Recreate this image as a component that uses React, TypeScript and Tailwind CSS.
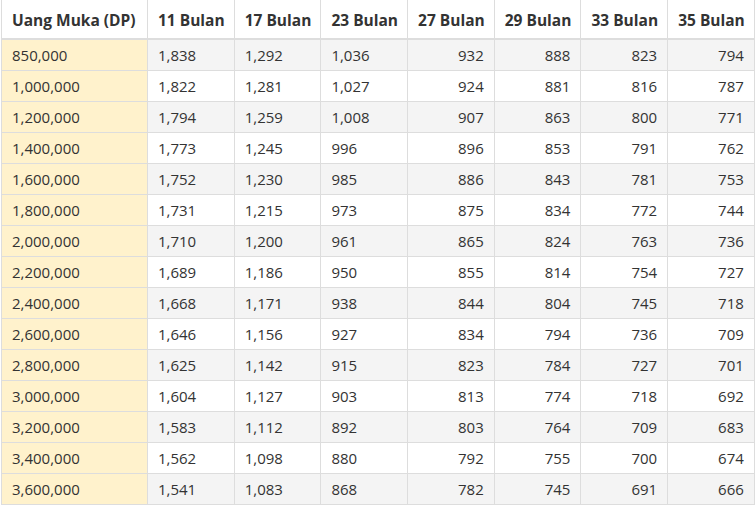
const MONTHS = [11, 17, 23, 27, 29, 33, 35];

// kolom 27 bulan ke atas rata kanan
const RIGHT_FROM = 3;

const ROWS: [string, number[]][] = [
  ['850,000',   [1838, 1292, 1036, 932, 888, 823, 794]],
  ['1,000,000', [1822, 1281, 1027, 924, 881, 816, 787]],
  ['1,200,000', [1794, 1259, 1008, 907, 863, 800, 771]],
  ['1,400,000', [1773, 1245, 996, 896, 853, 791, 762]],
  ['1,600,000', [1752, 1230, 985, 886, 843, 781, 753]],
  ['1,800,000', [1731, 1215, 973, 875, 834, 772, 744]],
  ['2,000,000', [1710, 1200, 961, 865, 824, 763, 736]],
  ['2,200,000', [1689, 1186, 950, 855, 814, 754, 727]],
  ['2,400,000', [1668, 1171, 938, 844, 804, 745, 718]],
  ['2,600,000', [1646, 1156, 927, 834, 794, 736, 709]],
  ['2,800,000', [1625, 1142, 915, 823, 784, 727, 701]],
  ['3,000,000', [1604, 1127, 903, 813, 774, 718, 692]],
  ['3,200,000', [1583, 1112, 892, 803, 764, 709, 683]],
  ['3,400,000', [1562, 1098, 880, 792, 755, 700, 674]],
  ['3,600,000', [1541, 1083, 868, 782, 745, 691, 666]],
];

const fmt = (n: number) => n.toLocaleString('en-US');

export default function App() {
  return (
    <div className="w-[756px] h-[506px] bg-white pl-px overflow-hidden" style={{ fontFamily: '"Open Sans", "Liberation Sans", sans-serif' }}>
      <table className="table-fixed border-collapse w-[753px] text-[15px] leading-5 text-[#333]">
        <colgroup>
          <col className="w-[146px]" />
          {MONTHS.map((m) => <col key={m} className="w-[86.7px]" />)}
        </colgroup>
        <thead>
          <tr>
            <th className="h-[39px] px-[10px] pt-px pb-0 text-left text-[15.5px] font-bold border-x border-[#ddd] border-b-2 border-b-[#ddd] whitespace-nowrap">Uang Muka (DP)</th>
            {MONTHS.map((m) => (
              <th key={m} className="h-[39px] px-[10px] pt-px pb-0 text-left text-[15.5px] font-bold border-x border-[#ddd] border-b-2 border-b-[#ddd] whitespace-nowrap">{m} Bulan</th>
            ))}
          </tr>
        </thead>
        <tbody>
          {ROWS.map(([dp, vals], i) => (
            <tr key={dp} className={i % 2 === 0 ? 'bg-[#f4f4f4]' : 'bg-white'}>
              <td className="h-[31px] px-[10px] pt-px pb-0 bg-[#fff2cc] border border-[#ddd]">{dp}</td>
              {vals.map((v, j) => (
                <td key={j} className={`h-[31px] px-[10px] pt-px pb-0 border border-[#ddd] ${j >= RIGHT_FROM ? 'text-right' : 'text-left'}`}>{fmt(v)}</td>
              ))}
            </tr>
          ))}
        </tbody>
      </table>
    </div>
  );
}
